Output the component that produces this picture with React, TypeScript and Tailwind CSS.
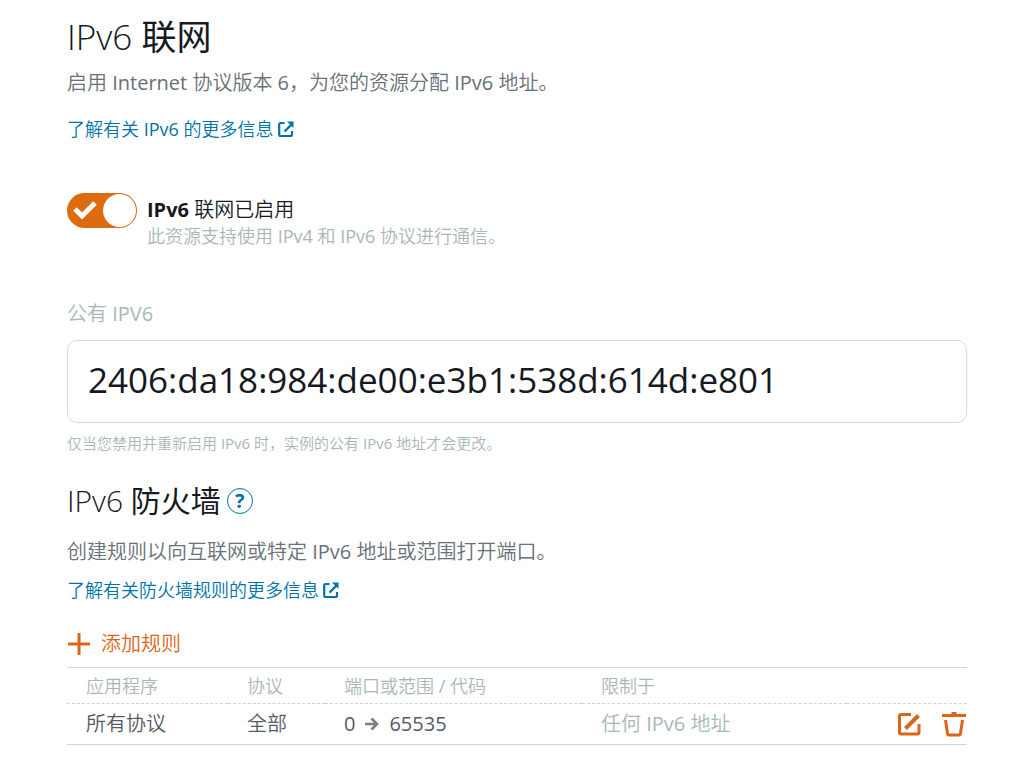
import type { ReactNode } from "react";

const rules = [{ id: 1, application: "所有协议", protocol: "全部", from: "0", to: "65535", restricted: "任何 IPv6 地址" }];

function ExternalIcon() {
  return (
    <svg viewBox="0 0 16 16" className="size-4 shrink-0" fill="none" stroke="currentColor" aria-hidden="true">
      <path d="M6.500 2H2.500Q1.200 2 1.200 3.500V13.500Q1.200 15 2.500 15H12.500Q14 15 14 13.500V10" strokeWidth="2.200" />
      <path d="M14 3L6.500 10.500" strokeWidth="2.400" />
      <path d="M9 0.500H15.500V7Z" fill="currentColor" stroke="none" />
    </svg>
  );
}

function ArrowIcon() {
  return (
    <svg viewBox="0 0 14 14" className="size-[14px] text-[#7a8080]" fill="none" stroke="currentColor" strokeWidth="2.600" aria-hidden="true">
      <path d="M0 7H12" />
      <path d="M6.500 1.500L12 7L6.500 12.500" />
    </svg>
  );
}

function PlusIcon() {
  return (
    <svg viewBox="0 0 24 24" className="size-6" fill="none" stroke="currentColor" strokeWidth="3" aria-hidden="true">
      <path d="M1 12H23M12 1V23" />
    </svg>
  );
}

function EditIcon() {
  return (
    <svg viewBox="0 0 24 24" className="size-6" fill="none" stroke="currentColor" strokeWidth="3" aria-hidden="true">
      <path d="M14 2.500H4Q2.500 2.500 2.500 4V20.500Q2.500 22 4 22H20.500Q22 22 22 20.500V12" />
      <path d="M8.500 16.500L21.500 3.500" strokeWidth="4" />
    </svg>
  );
}

function TrashIcon() {
  return (
    <svg viewBox="0 0 26 26" className="size-[26px]" fill="none" stroke="currentColor" strokeWidth="3" aria-hidden="true">
      <path d="M1 4.500H25" />
      <path d="M13 1V5" strokeWidth="5" />
      <path d="M4.500 9L6.500 22.500Q6.700 24 8 24H18Q19.300 24 19.500 22.500L21.500 9" />
    </svg>
  );
}

function LearnMore({ children }: { children: ReactNode }) {
  return (
    <a href="#" className="inline-flex items-center gap-1 text-[18px] leading-6 text-[#0073aa]">
      {children}
      <ExternalIcon />
    </a>
  );
}

function RulesTable() {
  return (
    <table className="mt-[9px] w-full table-fixed border-collapse border-y border-[#d0d4d4] text-left">
      <colgroup>
        <col className="w-[161px]" />
        <col className="w-[97px]" />
        <col className="w-[257px]" />
        <col />
        <col className="w-[120px]" />
      </colgroup>
      <thead>
        <tr className="h-9 border-b border-dashed border-[#d0d4d4] text-[18px] leading-6 text-[#aab7b8]">
          <th className="pl-[19px] font-normal">应用程序</th>
          <th className="pl-[19px] font-normal">协议</th>
          <th className="pl-[19px] font-normal">端口或范围 / 代码</th>
          <th className="pl-[19px] font-normal">限制于</th>
          <th aria-label="操作" />
        </tr>
      </thead>
      <tbody>
        {rules.map((rule) => (
          <tr key={rule.id} className="h-[41px] text-[20px] leading-7 text-[#545b64]">
            <td className="pl-[19px]">{rule.application}</td>
            <td className="pl-[19px]">{rule.protocol}</td>
            <td className="pl-[19px]">
              <span className="flex items-center gap-[10px]">
                {rule.from}
                <ArrowIcon />
                {rule.to}
              </span>
            </td>
            <td className="pl-[19px] text-[#aab7b8]">{rule.restricted}</td>
            <td>
              <div className="flex items-center justify-end gap-5 text-[#d9661a]">
                <button type="button" aria-label="编辑规则"><EditIcon /></button>
                <button type="button" aria-label="删除规则"><TrashIcon /></button>
              </div>
            </td>
          </tr>
        ))}
      </tbody>
    </table>
  );
}

export default function App() {
  return (
    <main className="min-h-screen bg-white pt-[15px] pr-[61px] pb-5 pl-[67px] font-['Open_Sans','Noto_Sans_CJK_SC_DemiLight','Noto_Sans_CJK_SC',sans-serif] font-normal text-[#16191f]">
      <h1 className="text-[35px] leading-[44px] font-['Open_Sans','Noto_Sans_CJK_SC',sans-serif]">
        <span className="font-light">IPv6</span> 联网
      </h1>
      <p className="mt-[10px] text-[20px] leading-7 text-[#687078]">启用 Internet 协议版本 6，为您的资源分配 IPv6 地址。</p>
      <div className="mt-5 flex">
        <LearnMore>了解有关 IPv6 的更多信息</LearnMore>
      </div>

      <div className="mt-[52px] flex gap-[10px]">
        <button
          id="ipv6-toggle"
          type="button"
          role="switch"
          aria-checked="true"
          aria-describedby="ipv6-note"
          className="flex h-[35px] w-[70px] shrink-0 items-center justify-between rounded-full bg-[#dd6b10] p-px pl-[6px]"
        >
          <svg viewBox="0 0 24 20" className="h-5 w-6" fill="none" stroke="white" strokeWidth="5" aria-hidden="true">
            <path d="M2 8L9 15L22 2" />
          </svg>
          <span className="size-[33px] rounded-full bg-white" />
        </button>
        <div>
          <label htmlFor="ipv6-toggle" className="mt-[3px] block text-[20px] leading-7">
            <strong className="font-bold">IPv6</strong> 联网已启用
          </label>
          <p id="ipv6-note" className="text-[18px] leading-6 text-[#aab7b8]">此资源支持使用 IPv4 和 IPv6 协议进行通信。</p>
        </div>
      </div>

      <label htmlFor="public-ipv6" className="mt-[54px] block text-[20px] leading-6 text-[#aab7b8]">公有 IPV6</label>
      <input
        id="public-ipv6"
        readOnly
        value="2406:da18:984:de00:e3b1:538d:614d:e801"
        aria-describedby="public-ipv6-note"
        className="mt-[14px] block h-[83px] w-full rounded-[10px] border border-[#d5dbdb] px-5 pb-1 text-[35px]"
      />
      <p id="public-ipv6-note" className="mt-[10px] text-[15px] leading-5 text-[#aab7b8]">仅当您禁用并重新启用 IPv6 时，实例的公有 IPv6 地址才会更改。</p>

      <div className="mt-7 flex items-center gap-[6px]">
        <h2 className="text-[30px] leading-10 font-['Open_Sans','Noto_Sans_CJK_SC',sans-serif]">
          <span className="font-light">IPv6</span> 防火墙
        </h2>
        <button type="button" aria-label="帮助" className="flex size-[26px] items-center justify-center rounded-full border border-[#0073aa] text-[20px] leading-5 font-bold text-[#0073aa]">
          ?
        </button>
      </div>
      <p className="mt-[17px] text-[20px] leading-7 text-[#687078]">创建规则以向互联网或特定 IPv6 地址或范围打开端口。</p>
      <div className="mt-3 flex">
        <LearnMore>了解有关防火墙规则的更多信息</LearnMore>
      </div>

      <button type="button" className="mt-7 flex items-center gap-[10px] text-[20px] leading-7 text-[#d9661a]">
        <PlusIcon />
        添加规则
      </button>
      <RulesTable />
    </main>
  );
}
